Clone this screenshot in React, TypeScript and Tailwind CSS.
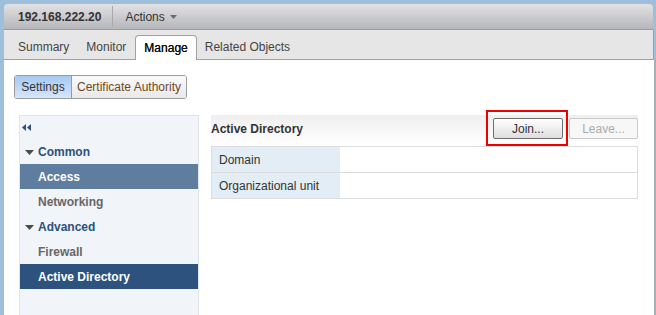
import React from "react";

const font = { fontFamily: '"Liberation Sans", Arial, sans-serif' };

function NavRow({
  label,
  variant,
  arrow,
}: {
  label: string;
  variant: "group" | "item" | "selLight" | "selDark";
  arrow?: boolean;
}) {
  const base = "h-[25px] flex items-center text-[12px] font-bold";
  const styles: Record<string, string> = {
    group: "text-[#2b517b] pl-[5px]",
    item: "text-[#666666] pl-[18px]",
    selLight: "bg-[#5f7d9e] text-white pl-[18px]",
    selDark: "bg-[#2c527d] text-white pl-[18px]",
  };
  return (
    <div className={`${base} ${styles[variant]}`}>
      {arrow && (
        <svg width="9" height="5" viewBox="0 0 9 5" className="mr-[4px] mt-[2px]">
          <path d="M0 0 L9 0 L4.5 5 Z" fill="#4a4a4a" />
        </svg>
      )}
      {label}
    </div>
  );
}

export default function App() {
  return (
    <div
      className="w-[656px] h-[315px] bg-[#9fbedc] pt-1 pl-1 overflow-hidden"
      style={font}
    >
      <div className="w-[652px] h-full flex flex-col">
        {/* header */}
        <div className="h-[26px] mr-[3px] rounded-t-[4px] bg-gradient-to-b from-[#e2e2e5] to-[#b6b7ba] border-b border-[#9c9c9c] flex items-center text-[12px] text-[#333]">
          <div className="pl-[14px] pr-[11px] font-bold">192.168.222.20</div>
          <div className="h-[21px] w-px bg-[#a9a9ab] mr-[12px]" />
          <div className="flex items-center">
            Actions
            <svg width="7" height="4" viewBox="0 0 7 4" className="ml-[5px]">
              <path d="M0 0 L7 0 L3.5 4 Z" fill="#6b6b6b" />
            </svg>
          </div>
        </div>
        {/* tab bar */}
        <div className="h-[30px] mr-[2px] bg-[#e6e6e6] border-b border-r border-[#a0a0a0] flex items-end pl-[6px] text-[12px] text-[#444]">
          <div className="h-[24px] px-[8px] flex items-center">Summary</div>
          <div className="h-[24px] px-[8px] flex items-center ml-px">Monitor</div>
          <div className="h-[25px] px-[8px] -mb-px ml-[1px] flex items-center bg-white border border-b-0 border-[#a0a0a0] rounded-t-[4px] text-[#111] [text-shadow:0_0_0.4px_#000]">
            Manage
          </div>
          <div className="h-[24px] px-[8px] flex items-center">Related Objects</div>
        </div>
        {/* content */}
        <div className="flex-1 bg-white border-r-2 border-[#a9aeb5] pl-[10px] pt-[15px] flex flex-col min-h-0">
          <div className="flex h-[24px] w-[173px] border border-[#9b9b9b] rounded-[3px] overflow-hidden text-[12px]">
            <div className="w-[57px] flex items-center justify-center bg-gradient-to-b from-[#a6c8f2] to-[#d6e6fb] border-r border-[#9b9b9b] text-[#333]">
              Settings
            </div>
            <div className="flex-1 flex items-center justify-center bg-gradient-to-b from-[#fafafa] to-[#e9e9e9] text-[#6e4a26]">
              Certificate Authority
            </div>
          </div>
          <div className="flex flex-1 mt-[16px] min-h-0">
            {/* nav */}
            <div className="w-[180px] ml-[5px] bg-[#f1f4f9] border border-b-0 border-[#dfe5ec] flex flex-col">
              <div className="h-[23px] flex items-center pl-[2px]">
                <svg width="10" height="7" viewBox="0 0 10 7">
                  <path d="M0 3.5 L4 0 L4 7 Z" fill="#2b517b" />
                  <path d="M5 3.5 L9 0 L9 7 Z" fill="#2b517b" />
                </svg>
              </div>
              <NavRow label="Common" variant="group" arrow />
              <NavRow label="Access" variant="selLight" />
              <NavRow label="Networking" variant="item" />
              <NavRow label="Advanced" variant="group" arrow />
              <NavRow label="Firewall" variant="item" />
              <NavRow label="Active Directory" variant="selDark" />
            </div>
            {/* right panel */}
            <div className="w-[427px] ml-[12px] flex flex-col">
              <div className="h-[31px] bg-gradient-to-b from-[#efefef] to-white flex items-start justify-between">
                <div className="text-[12px] font-bold text-[#333] pt-[5px]">Active Directory</div>
                <div className="flex pt-[3px] gap-[6px]">
                  <div className="relative">
                    <div className="w-[70px] h-[21px] flex items-center justify-center text-[12px] text-[#333] bg-gradient-to-b from-white to-[#dedede] border border-[#6e6e6e] rounded-[2px]">
                      Join...
                    </div>
                    <div className="absolute -left-[7px] -top-[8px] w-[82px] h-[36px] border-2 border-[#ee0000]" />
                  </div>
                  <div className="w-[69px] h-[21px] flex items-center justify-center text-[12px] text-[#ababab] bg-[#f7f7f7] border border-[#c9c9c9] rounded-[2px]">
                    Leave...
                  </div>
                </div>
              </div>
              <div className="border border-[#dcdcdc] text-[12px] text-[#333]">
                <div className="flex h-[26px] border-b border-[#dcdcdc]">
                  <div className="w-[128px] bg-[#e3edf5] flex items-center pl-[7px]">Domain</div>
                  <div className="flex-1" />
                </div>
                <div className="flex h-[25px]">
                  <div className="w-[128px] bg-[#e3edf5] flex items-center pl-[7px]">Organizational unit</div>
                  <div className="flex-1" />
                </div>
              </div>
            </div>
          </div>
        </div>
      </div>
    </div>
  );
}
